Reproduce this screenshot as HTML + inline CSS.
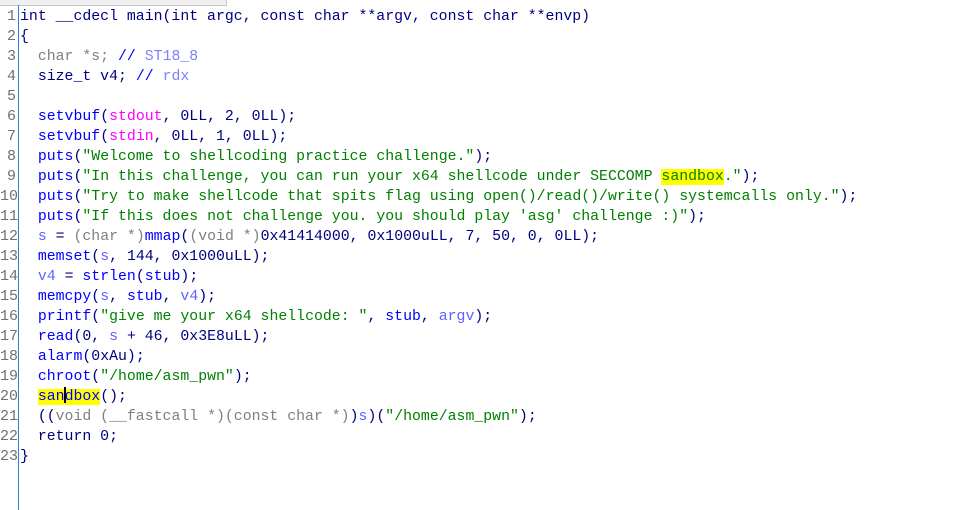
<!DOCTYPE html>
<html><head><style>
body{margin:0;width:958px;height:510px;background:#fff;overflow:hidden;position:relative;font-family:"Liberation Mono",monospace;font-size:14.85px;}
.bar{position:absolute;left:0;top:0;width:226px;height:5px;background:#f0f0f0;border-right:1px solid #c8c8c8;border-bottom:1px solid #c8c8c8;}
.vl{position:absolute;left:18px;top:5px;width:1px;height:505px;background:#2a7fd0;}
.g{position:absolute;left:0;top:7px;width:16px;text-align:right;color:#707070;line-height:20px;white-space:pre;font-size:15px;}
.c{position:absolute;left:20px;top:7px;line-height:20px;white-space:pre;color:#000080;}
.f{color:#0000ff}.s{color:#008000}.v{color:#6060ff}.gr{color:#808080}.p{color:#ff00ff}.cm{color:#8080ff}.cb{color:#0000ff}
.h{background:#ffff00}
.cur{display:inline-block;width:2px;height:16px;background:#000;vertical-align:-3px;margin:0 -1px;}
</style></head><body>
<div class="bar"></div><div class="vl"></div>
<div class="g">1
2
3
4
5
6
7
8
9
10
11
12
13
14
15
16
17
18
19
20
21
22
23</div>
<div class="c">int __cdecl main(int argc, const char **argv, const char **envp)
{
  <span class="gr">char *s;</span> <span class="cb">//</span> <span class="cm">ST18_8</span>
  size_t v4; <span class="cb">//</span> <span class="cm">rdx</span>

  <span class="f">setvbuf</span>(<span class="p">stdout</span>, 0LL, 2, 0LL);
  <span class="f">setvbuf</span>(<span class="p">stdin</span>, 0LL, 1, 0LL);
  <span class="f">puts</span>(<span class="s">"Welcome to shellcoding practice challenge."</span>);
  <span class="f">puts</span>(<span class="s">"In this challenge, you can run your x64 shellcode under SECCOMP <span class="h">sandbox</span>."</span>);
  <span class="f">puts</span>(<span class="s">"Try to make shellcode that spits flag using open()/read()/write() systemcalls only."</span>);
  <span class="f">puts</span>(<span class="s">"If this does not challenge you. you should play 'asg' challenge :)"</span>);
  <span class="v">s</span> = <span class="gr">(char *)</span><span class="f">mmap</span>(<span class="gr">(void *)</span>0x41414000, 0x1000uLL, 7, 50, 0, 0LL);
  <span class="f">memset</span>(<span class="v">s</span>, 144, 0x1000uLL);
  <span class="v">v4</span> = <span class="f">strlen</span>(<span class="f">stub</span>);
  <span class="f">memcpy</span>(<span class="v">s</span>, <span class="f">stub</span>, <span class="v">v4</span>);
  <span class="f">printf</span>(<span class="s">"give me your x64 shellcode: "</span>, <span class="f">stub</span>, <span class="v">argv</span>);
  <span class="f">read</span>(0, <span class="v">s</span> + 46, 0x3E8uLL);
  <span class="f">alarm</span>(0xAu);
  <span class="f">chroot</span>(<span class="s">"/home/asm_pwn"</span>);
  <span class="f h">san<span class="cur"></span>dbox</span>();
  ((<span class="gr">void (__fastcall *)(const char *)</span>)<span class="v">s</span>)(<span class="s">"/home/asm_pwn"</span>);
  return 0;
}</div>
</body></html>
